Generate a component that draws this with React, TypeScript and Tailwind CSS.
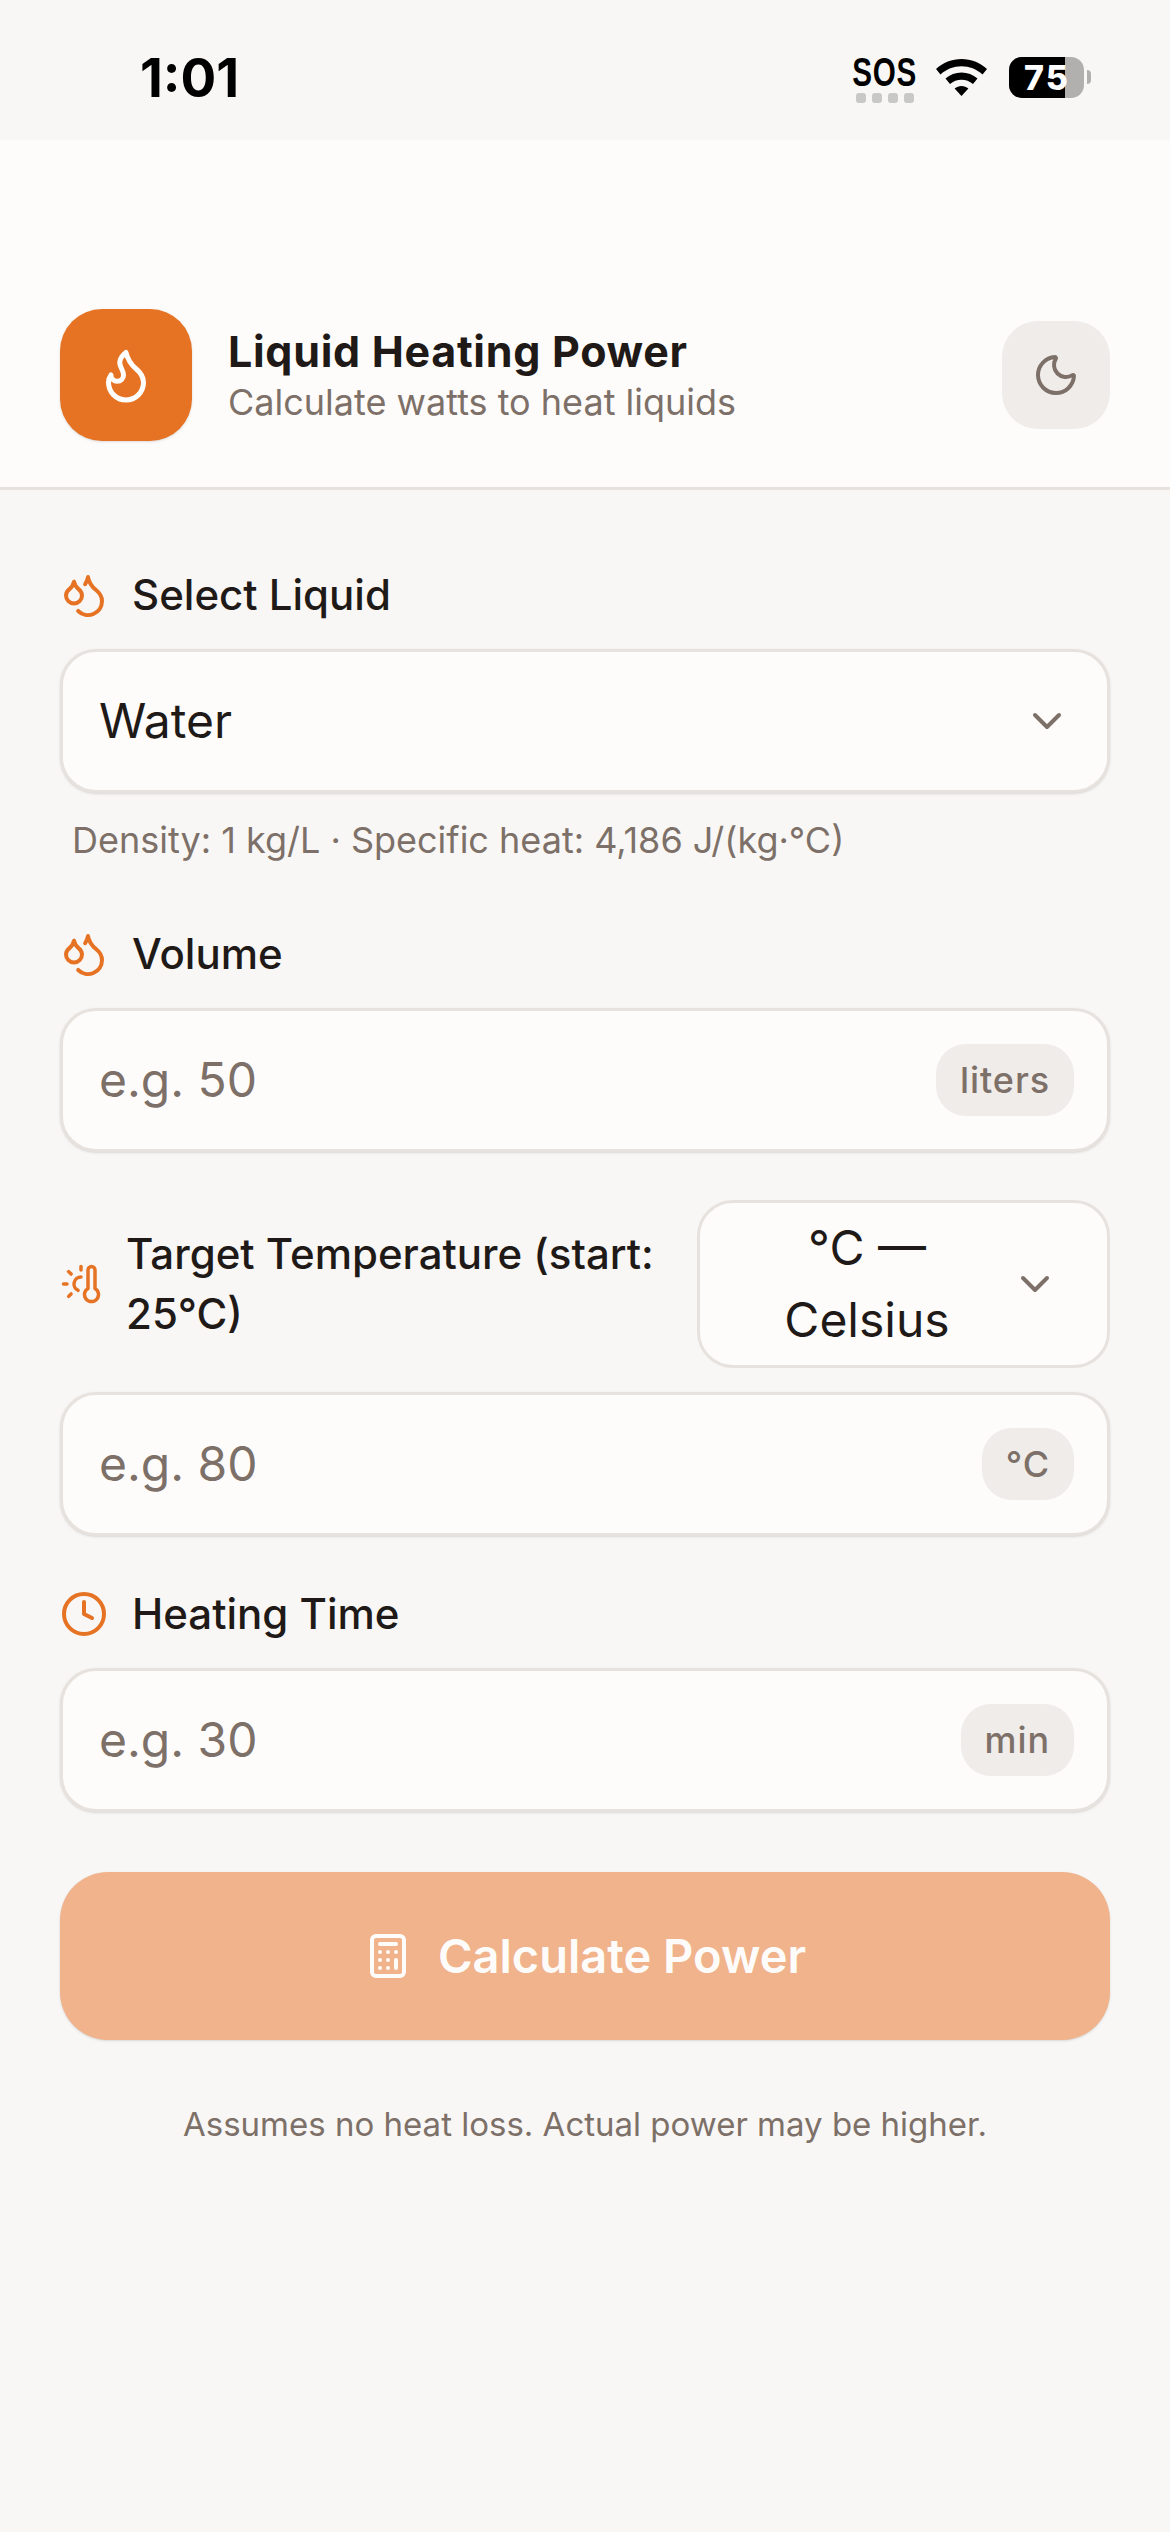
import { Calculator, ChevronDown, Clock, Droplets, Flame, Moon, ThermometerSun } from "lucide-react";
import type { ReactNode } from "react";

function StatusBar() {
  return (
    <div className="h-[140px] bg-[#f8f7f5] flex items-start justify-between pl-[140px] pr-[79px]">
      <span className="mt-[48px] text-[53px] leading-[60px] font-bold text-black">1:01</span>
      <div className="flex items-start mt-[57px]">
        <div className="flex flex-col items-center w-[61px]">
          <span className="font-['Liberation_Sans'] font-bold text-[40px] leading-[30px] text-black scale-x-[0.74] tracking-[1px]">SOS</span>
          <div className="flex gap-[6px] mt-[6px]">
            <i className="w-[10px] h-[10px] rounded-[3px] bg-[#c8c8c6]" />
            <i className="w-[10px] h-[10px] rounded-[3px] bg-[#c8c8c6]" />
            <i className="w-[10px] h-[10px] rounded-[3px] bg-[#c8c8c6]" />
            <i className="w-[10px] h-[10px] rounded-[3px] bg-[#c8c8c6]" />
          </div>
        </div>
        <svg className="ml-[21px] mt-[2px]" width="51" height="37" viewBox="0 0 51 37" fill="black">
          <path d="M25.5 0C35 0 44 3.6 51 10L46.5 15.5C40.5 10.2 33.3 7.3 25.5 7.3S10.5 10.2 4.5 15.5L0 10C7 3.6 16 0 25.5 0Z" />
          <path d="M25.5 13.5C31.500 13.500 37 15.700 41.500 19.600L37 25C33.700 22.200 29.800 20.700 25.500 20.700S17.300 22.200 14 25L9.500 19.600C14 15.700 19.500 13.500 25.500 13.500Z" />
          <path d="M25.500 27C28 27 30.400 27.900 32.400 29.500L25.500 37L18.600 29.500C20.600 27.900 23 27 25.500 27Z" />
        </svg>
        <div className="relative ml-[22px] w-[75px] h-[41px] rounded-[13px] overflow-hidden bg-[#b1b0ae]">
          <div className="h-full w-[56px] bg-black" />
          <span className="absolute left-[15px] top-0 text-[34px] leading-[41px] font-extrabold text-white tracking-[2px]">75</span>
        </div>
        <div className="mt-[13px] ml-[3px] w-[4px] h-[14px] rounded-r-full bg-[#b1b0ae]" />
      </div>
    </div>
  );
}

function FieldLabel({ icon, children }: { icon: ReactNode; children: ReactNode }) {
  return (
    <div className="flex items-center gap-[24px] h-[60px]">
      {icon}
      <span className="text-[42px] leading-[60px] font-medium text-[#1f1a17]">{children}</span>
    </div>
  );
}

function UnitInput({ placeholder, unit }: { placeholder: string; unit: string }) {
  return (
    <div className="h-[144px] rounded-[36px] border-[3px] border-[#e7e2de] bg-[#fdfcfb] shadow-sm flex items-center pl-[36px] pr-[33px]">
      <input
        placeholder={placeholder}
        className="flex-1 min-w-0 bg-transparent outline-none text-[48px] text-[#1f1a17] placeholder:text-[#7d7068]"
      />
      <span className="h-[72px] px-[24px] rounded-[30px] bg-[#efecea] text-[36px] leading-[72px] font-medium tracking-wide text-[#7d7068]">{unit}</span>
    </div>
  );
}

export default function App() {
  return (
    <div className="min-h-[2532px] bg-[#f8f7f5] font-['Inter',sans-serif]">
      <StatusBar />

      <header className="h-[350px] bg-[#fdfcfa] border-b-[3px] border-[#e7e2de] flex items-center justify-between pl-[60px] pr-[60px] pt-[123px]">
        <div className="flex items-center gap-[36px]">
          <div className="w-[132px] h-[132px] rounded-[42px] bg-[#e67324] shadow-sm flex items-center justify-center">
            <Flame size={60} strokeWidth={2} className="text-white" />
          </div>
          <div>
            <h1 className="text-[43px] leading-[54px] font-bold text-[#1f1a17] tracking-[0.7px]">Liquid Heating Power</h1>
            <p className="text-[36px] leading-[48px] text-[#7d7068]">Calculate watts to heat liquids</p>
          </div>
        </div>
        <button className="w-[108px] h-[108px] rounded-[36px] bg-[#efecea] flex items-center justify-center">
          <Moon size={48} strokeWidth={2} className="text-[#7d7068]" />
        </button>
      </header>

      <main className="px-[60px] pt-[75px]">
        <FieldLabel icon={<Droplets size={48} strokeWidth={2} className="text-[#e67324]" />}>Select Liquid</FieldLabel>
        <button className="mt-[24px] w-full h-[144px] rounded-[36px] border-[3px] border-[#e7e2de] bg-[#fdfcfb] shadow-sm flex items-center justify-between pl-[36px] pr-[36px]">
          <span className="text-[48px] text-[#1f1a17]">Water</span>
          <ChevronDown size={48} strokeWidth={2} className="text-[#7d7068]" />
        </button>
        <p className="mt-[23px] pl-[12px] text-[36px] leading-[48px] text-[#7d7068]">Density: 1 kg/L · Specific heat: 4,186 J/(kg·°C)</p>

        <div className="mt-[60px]">
          <FieldLabel icon={<Droplets size={48} strokeWidth={2} className="text-[#e67324]" />}>Volume</FieldLabel>
        </div>
        <div className="mt-[24px]">
          <UnitInput placeholder="e.g. 50" unit="liters" />
        </div>

        <div className="mt-[48px] flex items-center gap-[30px]">
          <div className="flex-1 flex items-center gap-[24px]">
            <ThermometerSun size={42} strokeWidth={2} className="text-[#e67324] shrink-0" />
            <span className="text-[42px] leading-[60px] font-medium text-[#1f1a17]">Target Temperature (start: 25°C)</span>
          </div>
          <button className="w-[413px] h-[168px] shrink-0 rounded-[36px] border-[3px] border-[#e7e2de] bg-[#fdfcfb] flex items-center pl-[23px] pr-[48px]">
            <span className="flex-1 text-[48px] leading-[72px] text-[#1f1a17] text-center">°C — Celsius</span>
            <ChevronDown size={48} strokeWidth={2} className="text-[#7d7068] shrink-0" />
          </button>
        </div>
        <div className="mt-[24px]">
          <UnitInput placeholder="e.g. 80" unit="°C" />
        </div>

        <div className="mt-[48px]">
          <FieldLabel icon={<Clock size={48} strokeWidth={2} className="text-[#e67324]" />}>Heating Time</FieldLabel>
        </div>
        <div className="mt-[24px]">
          <UnitInput placeholder="e.g. 30" unit="min" />
        </div>

        <button className="mt-[60px] w-full h-[168px] rounded-[48px] bg-[#f0b38c] shadow-sm flex items-center justify-center gap-[26px]">
          <Calculator size={48} strokeWidth={2} className="text-[#fdfcfa]" />
          <span className="text-[47px] font-semibold text-[#fdfcfa]">Calculate Power</span>
        </button>

        <p className="mt-[60px] text-center text-[33px] leading-[48px] text-[#7d7068]">Assumes no heat loss. Actual power may be higher.</p>
      </main>
    </div>
  );
}
